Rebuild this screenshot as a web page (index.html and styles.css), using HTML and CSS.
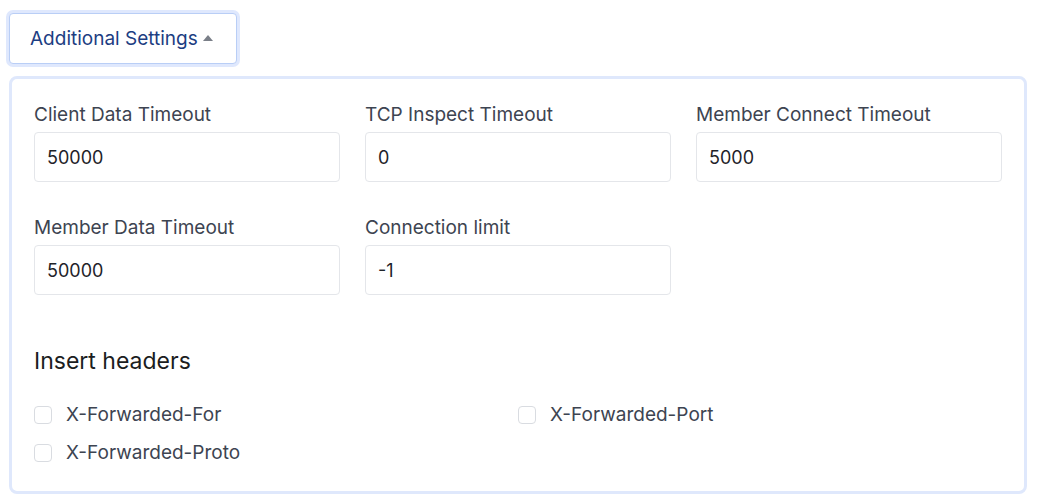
FILE: index.html
```html
<!DOCTYPE html>
<html>
<head>
<meta charset="utf-8">
<link rel="stylesheet" href="styles.css">
</head>
<body>
<div class="page">
  <button class="toggle" type="button">Additional Settings <span class="caret"></span></button>
  <div class="panel">
    <div class="fields">
      <div class="field">
        <label class="label">Client Data Timeout</label>
        <div class="input">50000</div>
      </div>
      <div class="field">
        <label class="label">TCP Inspect Timeout</label>
        <div class="input">0</div>
      </div>
      <div class="field">
        <label class="label">Member Connect Timeout</label>
        <div class="input">5000</div>
      </div>
      <div class="field">
        <label class="label">Member Data Timeout</label>
        <div class="input">50000</div>
      </div>
      <div class="field">
        <label class="label">Connection limit</label>
        <div class="input">-1</div>
      </div>
    </div>
    <h3 class="section-title">Insert headers</h3>
    <div class="checks">
      <label class="check"><span class="box"></span>X-Forwarded-For</label>
      <label class="check"><span class="box"></span>X-Forwarded-Port</label>
      <label class="check"><span class="box"></span>X-Forwarded-Proto</label>
    </div>
  </div>
</div>
</body>
</html>
```
FILE: styles.css
```css
* { box-sizing: border-box; }
html, body { margin: 0; padding: 0; background: #ffffff; }
body {
  font-family: Inter, "Noto Sans", sans-serif;
  color: #3d4451;
}
.page {
  padding: 13px 14px 0 9px;
}
.toggle {
  display: inline-flex;
  align-items: center;
  gap: 5px;
  height: 51px;
  width: 228px;
  padding: 0 0 0 20px;
  border: 1px solid #b9cef6;
  border-radius: 4px;
  box-shadow: 0 0 0 3px #dfe8fd;
  background: #ffffff;
  font-family: Inter, "Noto Sans", sans-serif;
  font-size: 19px;
  color: #1c3d82;
  cursor: pointer;
}
.caret {
  width: 0;
  height: 0;
  border-left: 5px solid transparent;
  border-right: 5px solid transparent;
  border-bottom: 6px solid #7a7f88;
  margin-top: -2px;
}
.panel {
  margin-top: 12px;
  border: 3px solid #dfe8fc;
  border-radius: 8px;
  padding: 23px 22px 25px 22px;
}
.fields {
  display: grid;
  grid-template-columns: repeat(3, 306px);
  column-gap: 25px;
  row-gap: 33px;
}
.field {
  display: flex;
  flex-direction: column;
  gap: 4px;
}
.label {
  font-size: 19px;
  line-height: 26px;
  color: #3d4451;
}
.input {
  height: 50px;
  border: 1px solid #e4e6ea;
  border-radius: 4px;
  padding: 0 12px;
  display: flex;
  align-items: center;
  font-size: 18px;
  color: #1f2329;
}
.section-title {
  margin: 51px 0 26px 0;
  font-size: 23px;
  line-height: 30px;
  font-weight: 400;
  color: #1b1d21;
}
.checks {
  display: grid;
  grid-template-columns: 484px 484px;
  row-gap: 12px;
}
.check {
  display: flex;
  align-items: center;
  gap: 14px;
  font-size: 19px;
  line-height: 26px;
  color: #3d4451;
}
.box {
  width: 18px;
  height: 18px;
  border: 1px solid #d9dce1;
  border-radius: 4px;
  background: #fff;
}
```
